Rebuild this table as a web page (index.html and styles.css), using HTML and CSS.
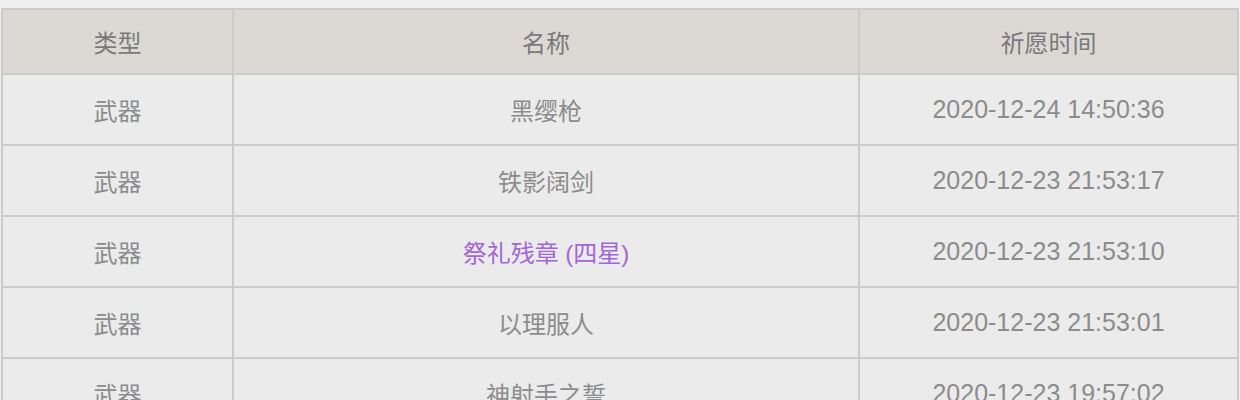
FILE: index.html
```html
<!DOCTYPE html>
<html lang="zh-CN">
<head>
<meta charset="utf-8">
<link rel="stylesheet" href="styles.css">
</head>
<body>
<table class="wish-table">
  <colgroup>
    <col class="col-type">
    <col class="col-name">
    <col class="col-time">
  </colgroup>
  <thead>
    <tr><th>类型</th><th>名称</th><th>祈愿时间</th></tr>
  </thead>
  <tbody>
    <tr><td>武器</td><td>黑缨枪</td><td class="time">2020-12-24 14:50:36</td></tr>
    <tr><td>武器</td><td>铁影阔剑</td><td class="time">2020-12-23 21:53:17</td></tr>
    <tr><td>武器</td><td class="star4">祭礼残章 (四星)</td><td class="time">2020-12-23 21:53:10</td></tr>
    <tr><td>武器</td><td>以理服人</td><td class="time">2020-12-23 21:53:01</td></tr>
    <tr><td>武器</td><td>神射手之誓</td><td class="time">2020-12-23 19:57:02</td></tr>
  </tbody>
</table>
</body>
</html>
```

FILE: styles.css
```css
html, body {
  background: #eeeeee;
}
body {
  margin: 8px 1px 0 1px;
  font-family: "Liberation Sans", "Noto Sans CJK SC", serif;
}
.wish-table {
  width: 100%;
  border-collapse: collapse;
  table-layout: fixed;
  font-size: 24px;
  color: #8c8c8c;
}
.col-type { width: 231px; }
.col-name { width: 626px; }
.wish-table th,
.wish-table td {
  border: 2px solid #cbcbcb;
  text-align: center;
  padding: 0;
}
.wish-table th {
  height: 63px;
  background: #dcd9d5;
  color: #7a7a7a;
  font-weight: normal;
}
.wish-table td {
  height: 69px;
  background: #ebebeb;
}
.wish-table td.star4 {
  color: #a366d6;
}
.wish-table td.time {
  font-size: 25px;
}
```
